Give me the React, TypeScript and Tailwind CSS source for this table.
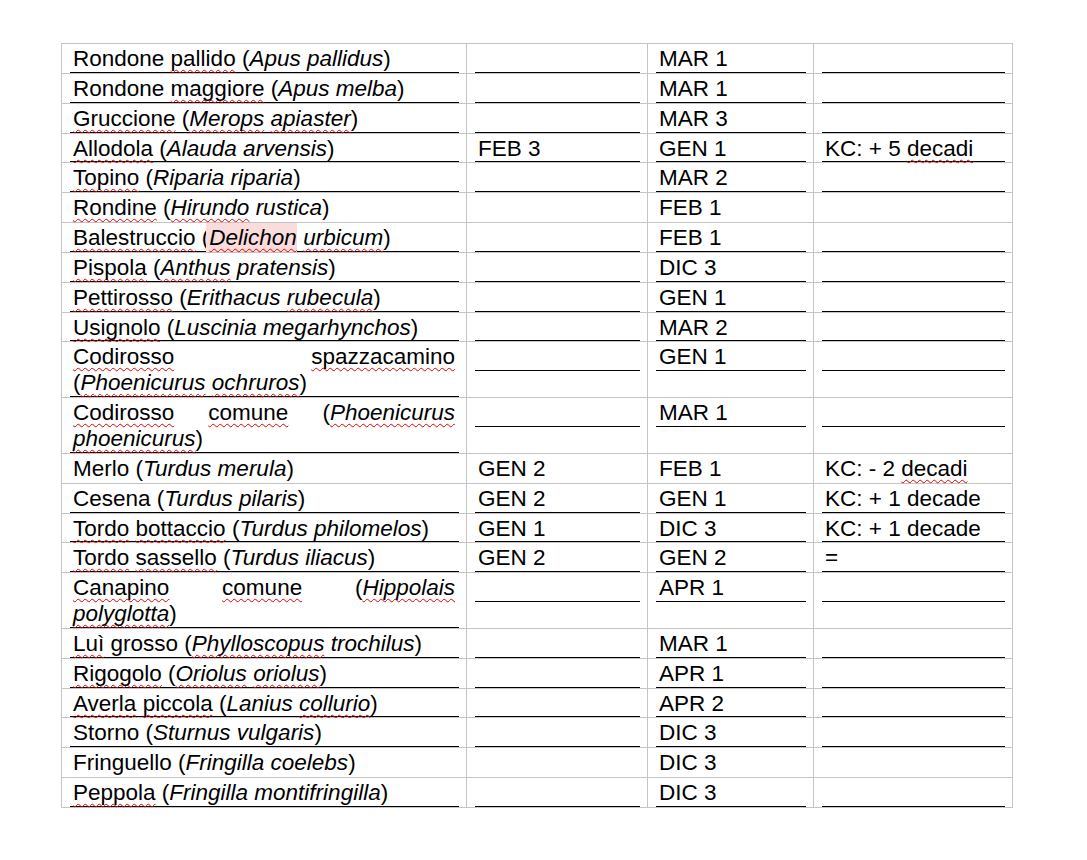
import React from "react";

type Row = { a: string; b: string; c: string; d: string; u: boolean };

const rows: Row[] = [
  { a: "Rondone ~pallido~ (/Apus pallidus/)", b: "", c: "MAR 1", d: "", u: true },
  { a: "Rondone ~maggiore~ (/Apus melba/)", b: "", c: "MAR 1", d: "", u: true },
  { a: "~Gruccione~ (/~Merops~ ~apiaster~/)", b: "", c: "MAR 3", d: "", u: true },
  { a: "~Allodola~ (/Alauda arvensis/)", b: "FEB 3", c: "GEN 1", d: "KC: + 5 ~decadi~", u: true },
  { a: "~Topino~ (/Riparia riparia/)", b: "", c: "MAR 2", d: "", u: true },
  { a: "~Rondine~ (/~Hirundo~ rustica/)", b: "", c: "FEB 1", d: "", u: false },
  { a: "~Balestruccio~ (/^Delichon^ ~urbicum~/)", b: "", c: "FEB 1", d: "", u: true },
  { a: "~Pispola~ (/~Anthus~ pratensis/)", b: "", c: "DIC 3", d: "", u: true },
  { a: "~Pettirosso~ (/Erithacus ~rubecula~/)", b: "", c: "GEN 1", d: "", u: true },
  { a: "~Usignolo~ (/Luscinia megarhynchos/)", b: "", c: "MAR 2", d: "", u: true },
  { a: "~Codirosso~ ~spazzacamino~ (/~Phoenicurus~ ~ochruros~/)", b: "", c: "GEN 1", d: "", u: true },
  { a: "~Codirosso~ ~comune~ (/~Phoenicurus~ ~phoenicurus~/)", b: "", c: "MAR 1", d: "", u: true },
  { a: "Merlo (/Turdus merula/)", b: "GEN 2", c: "FEB 1", d: "KC: - 2 ~decadi~", u: false },
  { a: "Cesena (/Turdus pilaris/)", b: "GEN 2", c: "GEN 1", d: "KC: + 1 decade", u: true },
  { a: "~Tordo~ ~bottaccio~ (/Turdus philomelos/)", b: "GEN 1", c: "DIC 3", d: "KC: + 1 decade", u: true },
  { a: "~Tordo~ ~sassello~ (/Turdus iliacus/)", b: "GEN 2", c: "GEN 2", d: "=", u: true },
  { a: "~Canapino~ ~comune~ (/~Hippolais~ ~polyglotta~/)", b: "", c: "APR 1", d: "", u: true },
  { a: "~Luì~ grosso (/~Phylloscopus~ trochilus/)", b: "", c: "MAR 1", d: "", u: true },
  { a: "~Rigogolo~ (/~Oriolus~ ~oriolus~/)", b: "", c: "APR 1", d: "", u: true },
  { a: "~Averla~ ~piccola~ (/Lanius ~collurio~/)", b: "", c: "APR 2", d: "", u: true },
  { a: "Storno (/Sturnus vulgaris/)", b: "", c: "DIC 3", d: "", u: true },
  { a: "Fringuello (/Fringilla coelebs/)", b: "", c: "DIC 3", d: "", u: false },
  { a: "~Peppola~ (/Fringilla montifringilla/)", b: "", c: "DIC 3", d: "", u: true },
];

function Rich({ text }: { text: string }) {
  const parts = text.split(/([\/~^])/);
  let italic = false;
  let wavy = false;
  let hl = false;
  const out: React.ReactNode[] = [];
  parts.forEach((p, idx) => {
    if (p === "/") {
      italic = !italic;
      return;
    }
    if (p === "~") {
      wavy = !wavy;
      return;
    }
    if (p === "^") {
      hl = !hl;
      return;
    }
    if (!p) return;
    const cls = [
      italic ? "italic" : "",
      wavy || hl
        ? "underline decoration-wavy decoration-[#e60000] decoration-1 underline-offset-[3px] [text-decoration-skip-ink:none]"
        : "",
      hl ? "bg-[#fbdcdc] pl-[3px] -ml-[3px] py-[2px]" : "",
    ]
      .filter(Boolean)
      .join(" ");
    out.push(
      <span key={idx} className={cls}>
        {p}
      </span>
    );
  });
  return <>{out}</>;
}

function Para({ text, u, justify }: { text: string; u: boolean; justify?: boolean }) {
  return (
    <div
      className={`border-b pl-[3px] pr-[4px] leading-[25.85px] ${u ? "border-black" : "border-transparent"} ${
        justify ? "text-justify" : ""
      }`}
    >
      {text ? <Rich text={text} /> : "\u00a0"}
    </div>
  );
}

export default function App() {
  return (
    <div className="min-h-[860px] bg-white pt-[43px] pl-[61px] text-black font-['Liberation_Sans',Arial,sans-serif] text-[22.5px]">
      <table className="border-collapse table-fixed w-[951px]">
        <colgroup>
          <col className="w-[405px]" />
          <col className="w-[181px]" />
          <col className="w-[166px]" />
          <col className="w-[199px]" />
        </colgroup>
        <tbody>
          {rows.map((r, i) => (
            <tr key={i}>
              <td className="border border-[#c4c4c4] align-top pt-[2px] pl-[8px] pr-[7px] pb-0">
                <Para text={r.a} u={r.u} justify />
              </td>
              <td className="border border-[#c4c4c4] align-top pt-[2px] pl-[8px] pr-[7px] pb-0">
                <Para text={r.b} u={r.u} />
              </td>
              <td className="border border-[#c4c4c4] align-top pt-[2px] pl-[8px] pr-[7px] pb-0">
                <Para text={r.c} u={r.u} />
              </td>
              <td className="border border-[#c4c4c4] align-top pt-[2px] pl-[8px] pr-[7px] pb-0">
                <Para text={r.d} u={r.u} />
              </td>
            </tr>
          ))}
        </tbody>
      </table>
    </div>
  );
}
